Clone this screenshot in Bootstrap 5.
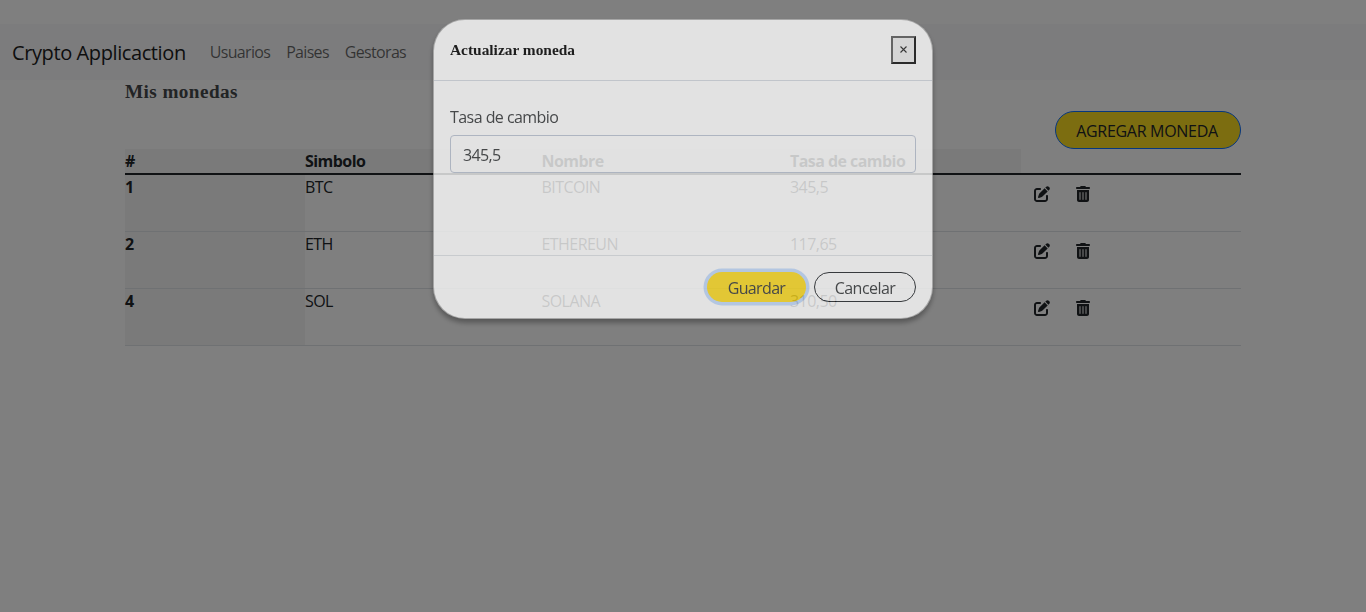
<!DOCTYPE html>
<html lang="es">
<head>
<meta charset="utf-8">
<meta name="viewport" content="width=device-width, initial-scale=1">
<title>Crypto Applicaction</title>
<link href="https://cdn.jsdelivr.net/npm/bootstrap@5.3.0/dist/css/bootstrap.min.css" rel="stylesheet">
<style>
body{font-family:"Open Sans","Noto Sans",sans-serif;font-size:16px;line-height:1.5;letter-spacing:-.55px;color:#212529;background:#fff;overflow:hidden}
.app-nav{height:56px;background:#f8f9fa}
.app-nav .navbar-brand{font-size:20px;letter-spacing:-.4px;color:#1c1c1c;margin-right:16px;padding:6px 0 4px}
.app-nav .nav-link{color:rgba(0,0,0,.6);letter-spacing:-.68px;padding-top:8px;padding-bottom:8px}
.page-title{font:700 19.2px/23px "Liberation Serif",serif;letter-spacing:.43px;color:#45484b;margin:0 0 8px}
.btn-add{width:186px;height:38px;border-radius:20px;background:#f9da20;border:1px solid #0d6efd;color:#212529;font-weight:500;letter-spacing:-.3px;padding:2px 2px 0 0}
.coin-table{table-layout:fixed;color:#212529;margin:0;--bs-table-color:#212529;--bs-table-bg:transparent}
.coin-table>:not(caption)>*>*{padding:0;border-bottom:1px solid #dee2e6}
.coin-table thead th{height:25px;line-height:23px;border-bottom:2px solid #212529!important}
.coin-table tbody tr{height:57px}
.coin-table th{background:#f5f5f5!important}
.coin-table .th-plain{background:transparent!important}
.btn-icon{border:0;padding:7px 12px;line-height:0;color:#212529}
.coin-actions{padding:4px 0 0 1px}
.modal-backdrop{--bs-backdrop-opacity:.5}
.modal-dialog{width:500px;max-width:500px;margin:19px auto;transform:translateX(0)}
.modal-content{height:300px;opacity:.77;border-radius:32px;border:1px solid rgba(0,0,0,.3);box-shadow:0 4px 5px rgba(0,0,0,.4);background:#fff;color:#212529}
.modal-header{height:61px;padding:0 16px;border-bottom:1px solid #d5dae2}
.modal-header .modal-title{font:700 15.4px/24px "Liberation Serif",serif;letter-spacing:0;color:#000}
.btn-dismiss{width:25px;height:28px;border:2px solid;border-color:#5c5c5c #111 #111 #5c5c5c;background:#efefef;padding:0;margin-top:-1px;line-height:0}
.modal-body{padding:24px 16px 0}
.modal-body .form-label{display:block;margin:0 0 6px;color:#343739}
.modal-body .form-control{height:38px;border-color:#bcc5d4;background:transparent;border-radius:4px;padding-top:7px;padding-bottom:5px;letter-spacing:-.65px;color:#343739}
.modal-footer{height:63px;padding:0 16px;gap:6px;border-top:1px solid #dee2e6}
.modal-footer>*{margin:0}
.btn-pill{height:30px;width:102px;border-radius:15px;padding:1px 0 0;line-height:28px;letter-spacing:-.55px}
.btn-save{width:99px;margin-right:2px;background:#ffdc1e;border:0;color:#343739;letter-spacing:-.65px;box-shadow:0 0 0 3.5px rgba(13,110,253,.25)}
.btn-cancel{border:1px solid #212529;color:#343739}
</style>
</head>
<body class="modal-open">
<svg class="d-none">
  <symbol id="ico-edit" viewBox="0 0 512 512"><path d="M471.6 21.7c-21.900-21.900-57.300-21.900-79.200 0L362.300 51.700l97.900 97.900 30.100-30.100c21.900-21.900 21.900-57.300 0-79.200L471.600 21.700zm-299.200 220c-6.100 6.100-10.800 13.600-13.500 21.900l-29.600 88.800c-2.900 8.600-.6 18.100 5.800 24.600s15.900 8.700 24.600 5.800l88.800-29.600c8.200-2.700 15.700-7.400 21.900-13.500L437.700 172.300 339.700 74.300 172.400 241.700zM96 64C43 64 0 107 0 160V416c0 53 43 96 96 96H352c53 0 96-43 96-96V320c0-17.700-14.300-32-32-32s-32 14.300-32 32v96c0 17.700-14.300 32-32 32H96c-17.700 0-32-14.300-32-32V160c0-17.700 14.300-32 32-32h96c17.700 0 32-14.300 32-32s-14.300-32-32-32H96z"/></symbol>
  <symbol id="ico-trash" viewBox="0 0 448 512"><path d="M135.200 17.700C140.600 6.800 151.700 0 163.800 0H284.200c12.100 0 23.200 6.800 28.600 17.700L320 32h96c17.700 0 32 14.300 32 32s-14.300 32-32 32H32C14.300 96 0 81.700 0 64S14.300 32 32 32h96l7.200-14.300zM32 128H416V448c0 35.300-28.700 64-64 64H96c-35.300 0-64-28.700-64-64V128zm96 64c-8.800 0-16 7.200-16 16V432c0 8.800 7.200 16 16 16s16-7.200 16-16V208c0-8.800-7.200-16-16-16zm96 0c-8.800 0-16 7.200-16 16V432c0 8.800 7.200 16 16 16s16-7.200 16-16V208c0-8.800-7.200-16-16-16zm96 0c-8.800 0-16 7.200-16 16V432c0 8.800 7.200 16 16 16s16-7.200 16-16V208c0-8.800-7.200-16-16-16z"/></symbol>
</svg>

<header class="pt-4">
  <nav class="navbar navbar-expand app-nav p-0">
    <div class="container-fluid">
      <a class="navbar-brand" href="#">Crypto Applicaction</a>
      <ul class="navbar-nav me-auto">
        <li class="nav-item"><a class="nav-link" href="#">Usuarios</a></li>
        <li class="nav-item"><a class="nav-link" href="#">Paises</a></li>
        <li class="nav-item"><a class="nav-link" href="#">Gestoras</a></li>
      </ul>
    </div>
  </nav>
</header>

<main class="container">
  <h4 class="page-title">Mis monedas</h4>
  <div class="d-flex justify-content-end">
    <button class="btn btn-add" type="button">AGREGAR MONEDA</button>
  </div>
  <table class="table coin-table">
    <colgroup><col style="width:180px"><col style="width:236.500px"><col style="width:248.500px"><col style="width:231px"><col></colgroup>
    <thead>
      <tr><th>#</th><th>Simbolo</th><th>Nombre</th><th>Tasa de cambio</th><th class="th-plain"></th></tr>
    </thead>
    <tbody>
      <tr><th>1</th><td>BTC</td><td>BITCOIN</td><td>345,5</td><td><div class="d-flex coin-actions"><button class="btn btn-icon"><svg width="16" height="16" fill="currentColor"><use href="#ico-edit"/></svg></button><button class="btn btn-icon"><svg width="18" height="16" fill="currentColor"><use href="#ico-trash"/></svg></button></div></td></tr>
      <tr><th>2</th><td>ETH</td><td>ETHEREUN</td><td>117,65</td><td><div class="d-flex coin-actions"><button class="btn btn-icon"><svg width="16" height="16" fill="currentColor"><use href="#ico-edit"/></svg></button><button class="btn btn-icon"><svg width="18" height="16" fill="currentColor"><use href="#ico-trash"/></svg></button></div></td></tr>
      <tr><th>4</th><td>SOL</td><td>SOLANA</td><td>310,50</td><td><div class="d-flex coin-actions"><button class="btn btn-icon"><svg width="16" height="16" fill="currentColor"><use href="#ico-edit"/></svg></button><button class="btn btn-icon"><svg width="18" height="16" fill="currentColor"><use href="#ico-trash"/></svg></button></div></td></tr>
    </tbody>
  </table>
</main>

<div class="modal-backdrop show"></div>
<div class="modal d-block" tabindex="-1">
  <div class="modal-dialog">
    <div class="modal-content">
      <div class="modal-header">
        <h5 class="modal-title">Actualizar moneda</h5>
        <button class="btn-dismiss" type="button" aria-label="Cerrar"><svg width="7" height="7" viewBox="0 0 7 7" stroke="#222" stroke-width="1.1"><path d="M.5.5l6 6M6.500.5l-6 6"/></svg></button>
      </div>
      <div class="modal-body">
        <label class="form-label" for="rate">Tasa de cambio</label>
        <input class="form-control" id="rate" type="text" value="345,5">
      </div>
      <div class="modal-footer">
        <button class="btn btn-pill btn-save" type="button">Guardar</button>
        <button class="btn btn-pill btn-cancel" type="button">Cancelar</button>
      </div>
    </div>
  </div>
</div>
<script src="https://cdn.jsdelivr.net/npm/bootstrap@5.3.0/dist/js/bootstrap.bundle.min.js"></script>
</body>
</html>
